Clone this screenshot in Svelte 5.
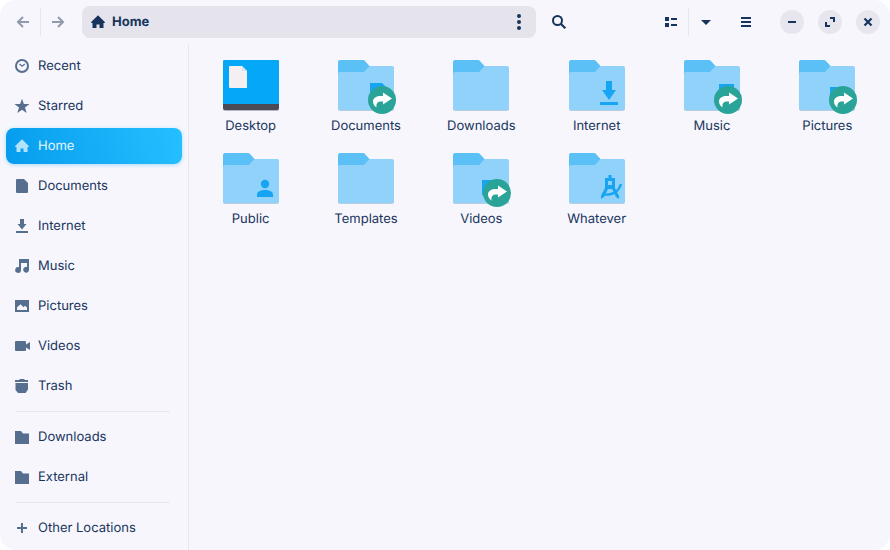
<script>
  const places = [
    { name: 'Recent', icon: 'recent' },
    { name: 'Starred', icon: 'star' },
    { name: 'Home', icon: 'home' },
    { name: 'Documents', icon: 'document' },
    { name: 'Internet', icon: 'download' },
    { name: 'Music', icon: 'music' },
    { name: 'Pictures', icon: 'picture' },
    { name: 'Videos', icon: 'video' },
    { name: 'Trash', icon: 'trash' }
  ];
  const bookmarks = [
    { name: 'Downloads', icon: 'folder' },
    { name: 'External', icon: 'folder' }
  ];
  const other = [{ name: 'Other Locations', icon: 'plus' }];
  const groups = [places, bookmarks, other];

  const files = [
    { name: 'Desktop', kind: 'desktop' },
    { name: 'Documents', emblem: 'document', link: true },
    { name: 'Downloads' },
    { name: 'Internet', emblem: 'download' },
    { name: 'Music', emblem: 'music', link: true },
    { name: 'Pictures', emblem: 'picture', link: true },
    { name: 'Public', emblem: 'person' },
    { name: 'Templates' },
    { name: 'Videos', emblem: 'video', link: true },
    { name: 'Whatever', emblem: 'compass' }
  ];

  let current = $state('Home');
</script>

{#snippet glyph(name)}
  <svg class="glyph" viewBox="0 0 16 16" width="16" height="16" aria-hidden="true">
    {#if name === 'recent'}
      <circle cx="8" cy="8" r="6" fill="none" stroke="currentColor" stroke-width="2" />
      <path d="M5.5 6 8 8.2 10.8 6" fill="none" stroke="currentColor" stroke-width="1.3" />
    {:else if name === 'star'}
      <path d="M8 .8 9.9 6H15.5L11 9.4 12.7 15 8 11.7 3.3 15 5 9.4.5 6H6.1Z" />
    {:else if name === 'home'}
      <path d="M8 1.2 14.8 8V9H13.5V14H9.5V10.5H6.5V14H2.5V9H1.2V8Z" />
    {:else if name === 'document'}
      <path d="M3 1h7l4 4v9a1 1 0 0 1-1 1H3a1 1 0 0 1-1-1V2a1 1 0 0 1 1-1Z" />
    {:else if name === 'download'}
      <path d="M6 1h4v5h2.5L8 11.5 3.5 6H6ZM2 13h12v2H2Z" />
    {:else if name === 'music'}
      <path d="M5 1h10v10.5A2.9 2.9 0 1 1 13 9V5H7v7A2.9 2.9 0 1 1 5 9.2Z" />
    {:else if name === 'picture'}
      <path fill-rule="evenodd" d="M1 2h14v12H1ZM3 12h10V9.5L11 7.8 9.5 9.2 6.5 6.3 3 9.5Z" />
    {:else if name === 'video'}
      <path d="M2 3h9a1 1 0 0 1 1 1v2.5L16 4v8l-4-2.5V12a1 1 0 0 1-1 1H2a1 1 0 0 1-1-1V4a1 1 0 0 1 1-1Z" />
    {:else if name === 'trash'}
      <path d="M1 2h4l1-1h4l1 1h3v2H1ZM1.5 5h12.5v6.5L11.5 15H4L1.5 12Z" />
    {:else if name === 'folder'}
      <path d="M1 2h6l2 2.5h6V15H1Z" />
    {:else if name === 'plus'}
      <path d="M7 3h2v4h4v2H9v4H7V9H3V7h4Z" />
    {:else if name === 'back'}
      <path d="M14 8H3M8 3 3 8l5 5" fill="none" stroke="currentColor" stroke-width="2" />
    {:else if name === 'forward'}
      <path d="M2 8h11M8 3l5 5-5 5" fill="none" stroke="currentColor" stroke-width="2" />
    {:else if name === 'dots'}
      <circle cx="8" cy="2" r="2" /><circle cx="8" cy="8" r="2" /><circle cx="8" cy="14" r="2" />
    {:else if name === 'search'}
      <circle cx="6.5" cy="6.5" r="4.5" fill="none" stroke="currentColor" stroke-width="2" />
      <path d="m10 10 4.3 4.3" stroke="currentColor" stroke-width="2.2" />
    {:else if name === 'list'}
      <path d="M2 3h4v4H2ZM8 4h6v2H8ZM2 9h4v4H2ZM8 10h6v2H8Z" />
    {:else if name === 'caret'}
      <path d="M3 6h10l-5 5Z" />
    {:else if name === 'menu'}
      <path d="M3 3h10v2H3ZM3 7h10v2H3ZM3 11h10v2H3Z" />
    {:else if name === 'minimize'}
      <path d="M4 7h8v2H4Z" />
    {:else if name === 'maximize'}
      <path d="M8 3h5v5h-2V5H8ZM3 8h2v3h3v2H3Z" />
    {:else if name === 'close'}
      <path d="m4.5 4.5 7 7m0-7-7 7" stroke="currentColor" stroke-width="2.2" />
    {/if}
  </svg>
{/snippet}

{#snippet fileIcon(file)}
  <svg class="file-icon" viewBox="0 0 64 58" width="64" height="58" aria-hidden="true">
    {#if file.kind === 'desktop'}
      <rect x="4" y="3" width="56" height="50" rx="2" fill="#35435d" opacity=".35" />
      <rect x="4" y="2" width="56" height="50" rx="2" fill="#4b4b57" />
      <path d="M6 2h52a2 2 0 0 1 2 2v42H4V4a2 2 0 0 1 2-2Z" fill="#05a8f7" />
      <path d="M11 8h12l5 5v17H11a1 1 0 0 1-1-1V9a1 1 0 0 1 1-1Z" fill="#f3eff2" />
      <path d="M23 8v5h5Z" fill="#d8e3ec" />
    {:else}
      <path d="M4 5h28l4 4h22a2 2 0 0 1 2 2v40a2 2 0 0 1-2 2H6a2 2 0 0 1-2-2Z" fill="#8ab4cd" opacity=".6" />
      <path d="M4 10 34 8h24a2 2 0 0 1 2 2v40a2 2 0 0 1-2 2H6a2 2 0 0 1-2-2Z" fill="#90d2fa" />
      <path d="M6 2h23a2 2 0 0 1 1.5.6L35.5 8 30.5 13.5a2 2 0 0 1-1.5.5H6a2 2 0 0 0-2 2V4a2 2 0 0 1 2-2Z" fill="#5bc0f6" />
      <g fill="#17a5f3">
        {#if file.emblem === 'document'}
          <path d="M36 25h12l6 6v18H36Z" />
        {:else if file.emblem === 'download'}
          <path d="M41 23h6v9h4l-7 10-7-10h4ZM35 44h18v3H35Z" />
        {:else if file.emblem === 'music'}
          <path d="M39 26h15v18H39Z" />
        {:else if file.emblem === 'picture'}
          <path d="M35 29h18v15H35Z" />
        {:else if file.emblem === 'video'}
          <path d="M33 29h16v15H33Z" />
        {:else if file.emblem === 'person'}
          <circle cx="46" cy="33" r="4.2" />
          <path d="M38 46v-2.5c0-3 3.5-4.5 8-4.5s8 1.5 8 4.5V46Z" />
        {:else if file.emblem === 'compass'}
          <path
            fill-rule="evenodd"
            d="M43.500 24h3v3h3.500v10l4 8v3l-3-2-4-8h-4l-4 8-3 2v-3l4-8V27h3.500ZM43 30v4h4v-4Z"
          />
          <path d="M37 43c8 2 16.500-1 19-10" fill="none" stroke="#17a5f3" stroke-width="2.4" />
        {/if}
      </g>
      {#if file.link}
        <circle cx="48" cy="42" r="14" fill="#2aa498" />
        <path
          d="M49 34.500l9 6-9 6v-3c-5-.5-7 1-6.500 6-2.300-1.600-3.500-3.400-3.500-6 0-4 4-6 10-5.500Z"
          fill="#fff"
        />
      {/if}
    {/if}
  </svg>
{/snippet}

<div class="window">
  <header>
    <div class="nav">
      <button class="tool faded" aria-label="Back">{@render glyph('back')}</button>
      <span class="divider"></span>
      <button class="tool faded" aria-label="Forward">{@render glyph('forward')}</button>
    </div>
    <div class="path">
      <button class="crumb">{@render glyph('home')}<span>Home</span></button>
      <button class="more" aria-label="Folder menu">{@render glyph('dots')}</button>
    </div>
    <button class="tool search" aria-label="Search">{@render glyph('search')}</button>
    <div class="view">
      <button class="tool" aria-label="List view">{@render glyph('list')}</button>
      <span class="divider"></span>
      <button class="tool" aria-label="View options">{@render glyph('caret')}</button>
    </div>
    <button class="tool" aria-label="Main menu">{@render glyph('menu')}</button>
    <div class="controls">
      <button class="round" aria-label="Minimize">{@render glyph('minimize')}</button>
      <button class="round" aria-label="Maximize">{@render glyph('maximize')}</button>
      <button class="round" aria-label="Close">{@render glyph('close')}</button>
    </div>
  </header>

  <div class="body">
    <nav aria-label="Places">
      {#each groups as group, i}
        {#if i > 0}<hr />{/if}
        {#each group as place}
          <button
            class="place"
            class:active={place.name === current}
            aria-current={place.name === current ? 'page' : undefined}
            onclick={() => (current = place.name)}
          >
            {@render glyph(place.icon)}<span>{place.name}</span>
          </button>
        {/each}
      {/each}
    </nav>
    <main>
      {#each files as file}
        <button class="file">
          {@render fileIcon(file)}
          <span>{file.name}</span>
        </button>
      {/each}
    </main>
  </div>
</div>

<style>
  :global(body) {
    margin: 0;
    background: #fff;
  }

  .window {
    display: flex;
    flex-direction: column;
    min-height: 100vh;
    box-sizing: border-box;
    overflow: hidden;
    border-radius: 16px;
    background: #f7f6fd;
    color: #17355c;
    font-family: Inter, 'Noto Sans', sans-serif;
    font-size: 13px;
    line-height: 16px;
    text-rendering: geometricPrecision;
    font-optical-sizing: none;
  }

  button {
    margin: 0;
    padding: 0;
    border: 0;
    background: none;
    color: inherit;
    font: inherit;
    text-rendering: inherit;
    font-optical-sizing: inherit;
    cursor: pointer;
  }

  .glyph {
    display: block;
    flex: none;
    fill: currentColor;
  }

  header {
    display: flex;
    align-items: center;
    height: 44px;
    padding: 0 10px 0 6px;
  }

  .nav,
  .view,
  .controls {
    display: flex;
    align-items: center;
  }

  .tool {
    display: grid;
    place-items: center;
    width: 34px;
    height: 32px;
  }

  .faded {
    color: #8f9bad;
  }

  .divider {
    width: 1px;
    height: 28px;
    background: #e5e6ee;
  }

  .path {
    display: flex;
    flex: 0 1 454px;
    align-items: center;
    justify-content: space-between;
    height: 32px;
    margin-left: 7px;
    border-radius: 8px;
    background: #e5e4ed;
  }

  .crumb {
    display: flex;
    align-items: center;
    gap: 6px;
    padding: 8px;
    font-weight: 700;
  }

  .more {
    padding: 8px 9px;
  }

  .search {
    margin: 0 auto 0 6px;
  }

  .view {
    margin-right: 6px;
  }

  .controls {
    gap: 14px;
    margin-left: 17px;
  }

  .round {
    display: grid;
    place-items: center;
    width: 24px;
    height: 24px;
    border-radius: 50%;
    background: #e7e6ee;
  }

  .body {
    display: flex;
    flex: 1;
  }

  nav {
    display: flex;
    flex: none;
    flex-direction: column;
    gap: 4px;
    width: 176px;
    padding: 4px 6px;
    border-right: 1px solid #e6e8ef;
  }

  hr {
    width: 154px;
    height: 1px;
    margin: 3px 10px;
    border: 0;
    background: #e5e8ee;
  }

  .place {
    display: flex;
    align-items: center;
    gap: 8px;
    height: 36px;
    padding: 0 8px;
    border-radius: 8px;
    text-align: left;
  }

  .place :global(.glyph) {
    color: #566f8f;
  }

  .place.active {
    background: linear-gradient(75deg, #069cee, #25c0ff);
    box-shadow: 0 1px 4px #a9d9f5;
    color: #e4f6ff;
  }

  .place.active :global(.glyph) {
    color: #b3e2fc;
  }

  main {
    display: grid;
    flex: 1;
    grid-template-columns: repeat(auto-fill, minmax(110px, 1fr));
    grid-auto-rows: 80px;
    align-content: start;
    row-gap: 13px;
    padding: 14px 5px 14px 4px;
  }

  .file {
    display: flex;
    flex-direction: column;
    align-items: center;
    gap: 2px;
  }

  .file-icon {
    display: block;
  }
</style>
